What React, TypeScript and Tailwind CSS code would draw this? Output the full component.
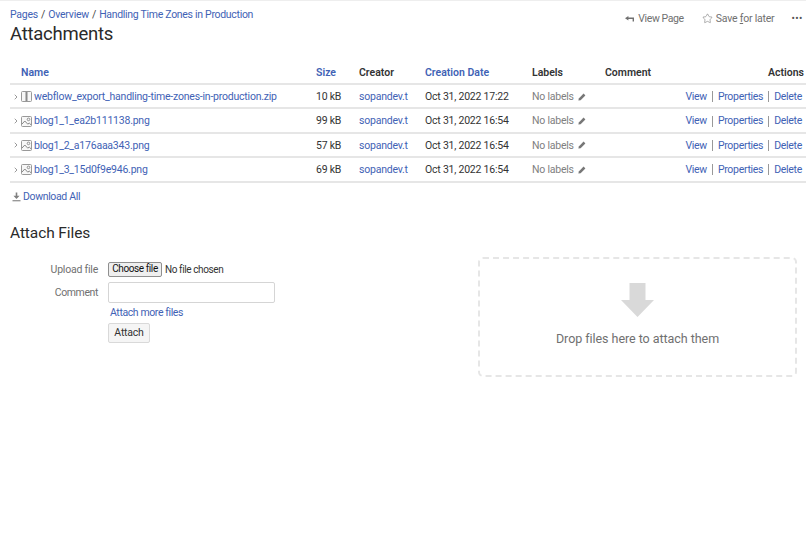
import { ChevronRight, Star } from "lucide-react";

const rows = [
  { name: "webflow_export_handling-time-zones-in-production.zip", size: "10 kB", date: "Oct 31, 2022 17:22", zip: true },
  { name: "blog1_1_ea2b111138.png", size: "99 kB", date: "Oct 31, 2022 16:54", zip: false },
  { name: "blog1_2_a176aaa343.png", size: "57 kB", date: "Oct 31, 2022 16:54", zip: false },
  { name: "blog1_3_15d0f9e946.png", size: "69 kB", date: "Oct 31, 2022 16:54", zip: false },
];

const gridCols = "grid grid-cols-[306px_43px_66px_107px_73px_1fr] items-center";

function ZipIcon() {
  return (
    <svg width="11" height="11" viewBox="0 0 11 11" className="shrink-0">
      <rect x="0.5" y="0.5" width="10" height="10" rx="1" fill="#f7f7f7" stroke="#999" />
      <rect x="4.5" y="1" width="2" height="9" fill="#8a8a8a" />
    </svg>
  );
}

function ImageIcon() {
  return (
    <svg width="11" height="11" viewBox="0 0 11 11" className="shrink-0">
      <rect x="0.5" y="0.5" width="10" height="10" rx="1" fill="#f7f7f7" stroke="#999" />
      <path d="M1 8 L3.8 5 L6.8 8.2 L8.2 7 L10 8.8" fill="none" stroke="#888" strokeWidth="1" />
      <circle cx="7.5" cy="3.4" r="1.3" fill="none" stroke="#888" strokeWidth="0.9" />
    </svg>
  );
}

function Pencil() {
  return (
    <svg width="8" height="8" viewBox="0 0 8 8" className="shrink-0">
      <path d="M5.6 0.6 L7.4 2.4 L2.6 7.2 L0.4 7.6 L0.8 5.4 Z" fill="#777" />
    </svg>
  );
}

function BackArrow() {
  return (
    <svg width="9" height="6" viewBox="0 0 9 6" className="shrink-0">
      <path d="M3.4 0 L0 2.2 L3.4 4.4 V3 H7.6 V5.6 H9 V1.5 H3.4 Z" fill="#707070" />
    </svg>
  );
}

function DownloadIcon() {
  return (
    <svg width="9" height="10" viewBox="0 0 9 10" className="shrink-0">
      <path d="M3.7 0.5 H5.3 V3.8 H7.6 L4.5 7 L1.4 3.8 H3.7 Z" fill="#808080" />
      <rect x="0.5" y="8.2" width="8" height="1.1" fill="#808080" />
    </svg>
  );
}

export default function App() {
  return (
    <div className="w-[806px] h-[538px] overflow-hidden bg-white border-t border-[#eeeeee] pl-[10px] font-['Roboto',sans-serif] text-[10.5px] tracking-[-0.22px] text-[#333333]">
      {/* Header */}
      <div className="flex justify-between h-[49px]">
        <div>
          <div className="flex items-center gap-[3px] mt-[7px] h-[13px] text-[#3f62b5]">
            <span>Pages</span>
            <span className="text-[#444]">/</span>
            <span>Overview</span>
            <span className="text-[#444]">/</span>
            <span className="tracking-[-0.3px]">Handling Time Zones in Production</span>
          </div>
          <h1 className="text-[18.5px] tracking-[-0.25px] leading-[24px] mt-[1px] text-[#2a2a2a]">Attachments</h1>
        </div>
        <div className="flex items-center h-[13px] mt-[11px] pr-[3px] text-[#707070]">
          <BackArrow />
          <span className="ml-[4px] tracking-[-0.4px]">View Page</span>
          <Star size={11} strokeWidth={1.2} className="ml-[18px]" />
          <span className="ml-[3px]">
            Save <span className="underline">f</span>or later
          </span>
          <span className="ml-[17px] text-[#555] text-[10px] tracking-[0.5px] leading-none">•••</span>
        </div>
      </div>

      {/* Attachments table */}
      <div className="mt-[16px]">
        <div className={`${gridCols} h-[19px] border-b-2 border-[#e6e6e6] font-semibold tracking-normal leading-[12px] text-[#333]`}>
          <span className="pl-[11px] pb-[4px] text-[#3f62b5]">Name</span>
          <span className="pb-[4px] text-[#3f62b5]">Size</span>
          <span className="pb-[4px]">Creator</span>
          <span className="pb-[4px] text-[#3f62b5]">Creation Date</span>
          <span className="pb-[4px]">Labels</span>
          <div className="flex justify-between pb-[4px] pr-[2px]">
            <span>Comment</span>
            <span>Actions</span>
          </div>
        </div>
        {rows.map((row) => (
          <div key={row.name} className={`${gridCols} h-[24.4px] pt-[1px] border-b-2 border-[#e6e6e6]`}>
            <div className="flex items-center">
              <ChevronRight size={8} strokeWidth={2} className="ml-[2px] text-[#666]" />
              <span className="ml-[1px]"></span>
              {row.zip ? <ZipIcon /> : <ImageIcon />}
              <span className="ml-[2px] text-[#3f62b5]">{row.name}</span>
            </div>
            <span>{row.size}</span>
            <span className="text-[#3f62b5]">sopandev.t</span>
            <span>{row.date}</span>
            <div className="flex items-center gap-[4px] text-[#808080]">
              <span>No labels</span>
              <Pencil />
            </div>
            <div className="flex justify-end items-center pr-[4px] tracking-[-0.3px] text-[#3f62b5]">
              <span>View</span>
              <span className="mx-[5px] h-[11px] border-l border-[#999]"></span>
              <span>Properties</span>
              <span className="mx-[5px] h-[11px] border-l border-[#999]"></span>
              <span>Delete</span>
            </div>
          </div>
        ))}
      </div>

      <div className="flex items-center gap-[2px] mt-[8px] ml-[2px] h-[13px] tracking-[-0.35px] text-[#3f62b5]">
        <DownloadIcon />
        <span>Download All</span>
      </div>

      {/* Attach files */}
      <h2 className="text-[15.5px] tracking-[-0.1px] leading-[20px] mt-[19px] text-[#2a2a2a]">Attach Files</h2>

      <div className="flex mt-[14px]">
        <div className="w-[468px]">
          <div className="flex items-center mt-[5px] h-[15px]">
            <span className="w-[88px] pt-[1px] text-right text-[#707070]">Upload file</span>
            <button className="ml-[10px] w-[54px] h-[15px] rounded-[2px] border border-[#8f8f8f] bg-[#efefef] text-[#111] text-[10px] tracking-[-0.4px] leading-none">
              Choose file
            </button>
            <span className="ml-[3px] text-[10px] tracking-[-0.4px] text-[#333]">No file chosen</span>
          </div>
          <div className="flex items-center mt-[5px] h-[21px]">
            <span className="w-[88px] pt-[2px] text-right tracking-[-0.4px] text-[#707070]">Comment</span>
            <input
              type="text"
              className="ml-[10px] w-[167px] h-[21px] rounded-[2px] border border-[#d5d5d5] bg-white"
            />
          </div>
          <div className="ml-[100px] mt-[2px] h-[13px] tracking-[-0.4px] text-[#3f62b5]">Attach more files</div>
          <button className="block ml-[98px] mt-[5px] w-[42px] h-[20px] rounded-[2px] border border-[#d9d9d9] bg-[#f5f5f5] text-[#333]">
            Attach
          </button>
        </div>
        <div className="w-[319px] h-[120px] flex flex-col items-center rounded-[5px] border-2 border-dashed border-[#e6e6e6]">
          <svg width="33" height="34" viewBox="0 0 33 34" className="mt-[24px]">
            <path d="M8.5 0 H24.5 V17 H33 L16.5 34 L0 17 H8.5 Z" fill="#d9d9d9" />
          </svg>
          <span className="mt-[13px] text-[12.5px] tracking-[-0.05px] text-[#707070]">Drop files here to attach them</span>
        </div>
      </div>
    </div>
  );
}
